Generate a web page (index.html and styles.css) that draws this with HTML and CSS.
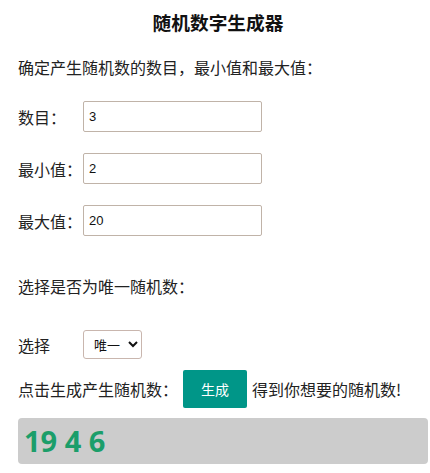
FILE: index.html
```html
<!DOCTYPE html>
<html>

<head>
  <meta charset="UTF-8">
  <title>随机数字生成器</title>
  <link rel="stylesheet" href="styles.css">
</head>

<body>
  <div class="wrap">
    <h3 class="title">随机数字生成器</h3>

    <p class="intro">确定产生随机数的数目，最小值和最大值：</p>

    <div class="row">
      <label class="label" for="count">数目：</label>
      <input type="text" id="count" class="field" value="3">
    </div>

    <div class="row">
      <label class="label" for="min">最小值：</label>
      <input type="text" id="min" class="field" value="2">
    </div>

    <div class="row">
      <label class="label" for="max">最大值：</label>
      <input type="text" id="max" class="field" value="20">
    </div>

    <p class="question">选择是否为唯一随机数：</p>

    <div class="row row-select">
      <label class="label" for="unique">选择</label>
      <select id="unique" class="choice">
        <option>唯一</option>
        <option>可重复</option>
      </select>
    </div>

    <div class="row row-action">
      <span>点击生成产生随机数：</span>
      <button type="button" class="btn">生成</button>
      <span>得到你想要的随机数!</span>
    </div>

    <div class="result">19 4 6</div>
  </div>
</body>

</html>
```

FILE: styles.css
```css
body {
  margin: 8px 2px 8px 8px;
  font-family: "Noto Sans CJK SC", "Noto Sans", sans-serif;
  font-size: 16px;
  line-height: 24px;
  color: #222;
  background-color: #fff;
}

.wrap {
  padding-left: 10px;
}

.title {
  margin: 2px 0 0;
  padding-right: 10px;
  font-size: 18.7px;
  line-height: 24px;
  text-align: center;
  font-weight: bold;
  color: #111;
}

.intro {
  margin: 21px 0 0;
}

.row {
  display: flex;
  align-items: center;
  margin-top: 22px;
}

.row + .row {
  margin-top: 21px;
}

.label {
  width: 65px;
  flex-shrink: 0;
}

.field {
  box-sizing: border-box;
  width: 179px;
  height: 31px;
  padding: 0 5px;
  border: 1px solid #c0b3a8;
  border-radius: 2px;
  font-family: "Liberation Sans", Arial, sans-serif;
  font-size: 13px;
  color: #111;
}

.question {
  margin: 38px 0 0;
}

.row.row-select {
  margin-top: 32px;
}

.choice {
  box-sizing: border-box;
  width: 59px;
  height: 29px;
  padding: 0 2px 0 6px;
  border: 1px solid #c9b6ae;
  border-radius: 3px;
  background-color: #fff;
  font-family: "Noto Sans CJK SC", sans-serif;
  font-size: 13px;
  color: #111;
}

.row.row-action {
  margin-top: 11px;
  gap: 5px;
}

.btn {
  width: 64px;
  height: 38px;
  border: none;
  border-radius: 2px;
  background-color: #009688;
  color: #fff;
  font-family: "Noto Sans CJK SC", sans-serif;
  font-size: 14px;
  cursor: pointer;
}

.result {
  display: flex;
  align-items: center;
  height: 46px;
  margin-top: 10px;
  padding-left: 6px;
  background-color: #ccc;
  border-radius: 4px;
  font-family: "Open Sans", sans-serif;
  font-size: 29px;
  font-weight: bold;
  color: #1b9e6a;
}
```
